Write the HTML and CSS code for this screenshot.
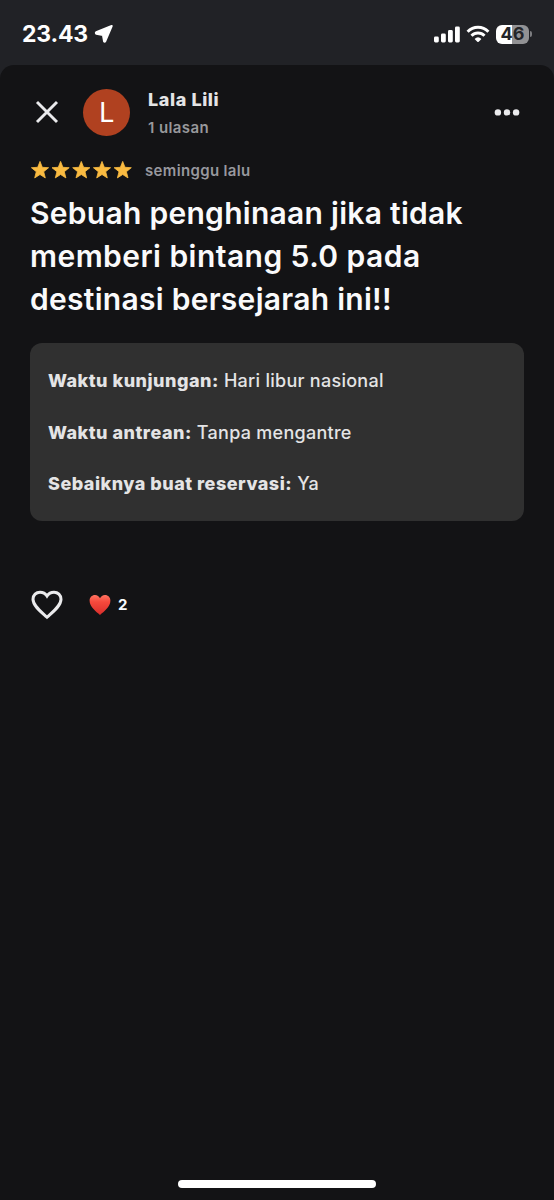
FILE: index.html
```
<!DOCTYPE html>
<html lang="id">
<head>
<meta charset="utf-8">
<title>Ulasan</title>
<link rel="stylesheet" href="styles.css">
</head>
<body>
<div class="screen">
  <div class="status">
    <span class="time">23.43</span>
    <svg class="location" width="20" height="20" viewBox="0 0 20 20"><path d="M17.700 2 2.200 8.300Q1.400 9 2.300 9.800L8.900 10.900 10 17.200Q10.600 18.300 11.300 17.200Z" fill="#fff" stroke="#fff" stroke-width="2" stroke-linejoin="round"/></svg>
    <div class="indicators">
      <svg width="26" height="17" viewBox="0 0 26 17" fill="#fff"><rect y="10.5" width="4.8" height="6" rx="1.4"/><rect x="7" y="7.5" width="4.8" height="9" rx="1.4"/><rect x="14" y="4" width="4.8" height="12.5" rx="1.4"/><rect x="21" y="0.5" width="4.8" height="16" rx="1.4"/></svg>
      <svg class="wifi" width="24" height="18" viewBox="0 0 24 18"><g fill="none" stroke="#fff" stroke-width="3"><path d="M1.6 6.7C7.4.9 16.6.9 22.4 6.7"/><path d="M5.5 10.8C9.1 7.2 14.900 7.200 18.500 10.800"/></g><path d="M8.600 13.900Q12 10.800 15.400 13.900L12.700 16.700Q12 17.300 11.300 16.700Z" fill="#fff"/></svg>
      <div class="battery">46</div>
      <span class="battery-tip"></span>
    </div>
  </div>
  <main class="sheet">
    <header class="header">
      <svg class="close" width="34" height="34" viewBox="0 0 34 34"><path d="M7 7 27 27M27 7 7 27" stroke="#eaeaec" stroke-width="2.900"/></svg>
      <div class="avatar">L</div>
      <div class="author">
        <div class="name">Lala Lili</div>
        <div class="count">1 ulasan</div>
      </div>
      <svg class="more" width="26" height="8" viewBox="0 0 26 8" fill="#eaeaec"><circle cx="3.900" cy="4.400" r="3.200"/><circle cx="13" cy="4.400" r="3.200"/><circle cx="22.100" cy="4.400" r="3.200"/></svg>
    </header>
    <div class="rating">
      <svg width="104" height="20" viewBox="0 0 104 20" fill="#fabb41"><defs><path id="star" d="M10 1.400 12.300 7.300 18.600 7.700 13.700 11.700 15.300 17.900 10 14.500 4.700 17.900 6.300 11.700 1.400 7.700 7.700 7.300Z" stroke="#fabb41" stroke-width=".8" stroke-linejoin="round"/></defs><use href="#star"/><use href="#star" x="20.600"/><use href="#star" x="41.300"/><use href="#star" x="62"/><use href="#star" x="82.700"/></svg>
      <span class="ago">seminggu lalu</span>
    </div>
    <h1 class="title">Sebuah penghinaan jika tidak<br><span class="wide">memberi bintang 5.0 pada</span><br>destinasi bersejarah ini!!</h1>
    <section class="details">
      <p><b>Waktu kunjungan:</b> Hari libur nasional</p>
      <p><b>Waktu antrean:</b> Tanpa mengantre</p>
      <p><b>Sebaiknya buat reservasi:</b> Ya</p>
    </section>
    <div class="reactions">
      <svg width="34" height="30" viewBox="0 0 34 30"><path d="M17 27.200C11.500 22.200 3 16 3 9.300C3 5 6.200 2.200 10 2.200C13 2.200 15.500 3.700 17 6C18.500 3.700 21 2.200 24 2.200C27.800 2.200 31 5 31 9.300C31 16 22.500 22.200 17 27.200Z" fill="none" stroke="#eaeaec" stroke-width="3"/></svg>
      <svg class="love" width="22" height="22" viewBox="0 0 22 22"><defs><linearGradient id="red" x2="0" y2="1"><stop stop-color="#ff7462"/><stop offset=".35" stop-color="#f6493c"/><stop offset="1" stop-color="#d92e2b"/></linearGradient></defs><path d="M11 21C7 17.500.6 13 .6 6.800C.6 3.200 3 1 6 1C8.400 1 10 2.300 11 4.300C12 2.300 13.600 1 16 1C19 1 21.400 3.200 21.400 6.800C21.400 13 15 17.500 11 21Z" fill="url(#red)"/></svg>
      <span class="likes">2</span>
    </div>
    <div class="home"></div>
  </main>
</div>
</body>
</html>
```
FILE: styles.css
```
* { box-sizing: border-box; }
body { margin: 0; background: #212226; font-family: Inter, "Liberation Sans", sans-serif; color: #e4e4e5; }
svg { display: block; flex: none; }
.screen { width: 554px; height: 1200px; display: flex; flex-direction: column; }
.status { height: 65px; padding: 3px 22px 0; display: flex; align-items: center; color: #fff; }
.time { font-size: 23px; font-weight: 700; letter-spacing: -0.2px; }
.location { margin-left: 6px; }
.indicators { margin-left: auto; display: flex; align-items: center; }
.wifi { margin-left: 6px; }
.battery { width: 33px; height: 19px; margin-left: 6px; border-radius: 6px; background: linear-gradient(90deg, #fff 47%, #929294 47%); color: #242529; font-size: 18px; font-weight: 700; line-height: 18px; text-align: center; }
.battery-tip { width: 2px; height: 6px; margin-left: 1px; border-radius: 0 3px 3px 0; background: #7c7d80; }
.sheet { flex: 1; background: #131315; border-radius: 14px 14px 0 0; padding: 22px 30px 0; display: flex; flex-direction: column; }
.header { height: 50px; display: flex; align-items: center; }
.avatar { width: 47px; height: 47px; margin-left: 19px; border-radius: 50%; background: #b04120; color: #fff; font: 27px/49px Roboto, sans-serif; text-align: center; }
.author { margin-left: 18px; padding-top: 4px; }
.name { font-size: 18px; line-height: 24px; font-weight: 800; letter-spacing: 0.6px; }
.count { margin-top: 4px; font-size: 15px; line-height: 24px; font-weight: 600; color: #98989b; letter-spacing: 0.4px; }
.more { margin-left: auto; margin-right: 4px; }
.rating { height: 24px; margin-top: 21px; display: flex; align-items: center; }
.ago { margin-left: 11px; font-size: 15px; font-weight: 600; color: #98989e; letter-spacing: 0.35px; }
.title { margin: 10px 0 0; font: 600 30px/43px Inter, sans-serif; color: #fafafb; white-space: nowrap; letter-spacing: 0.28px; }
.title .wide { letter-spacing: 0.45px; }
.details { height: 178px; margin-top: 22px; padding: 12px 18px; border-radius: 12px; background: #303030; display: flex; flex-direction: column; }
.details p { margin: 0; font-size: 18px; line-height: 51.700px; font-weight: 500; white-space: nowrap; letter-spacing: 0.27px; }
.details b { font-weight: 800; letter-spacing: 0.5px; }
.reactions { height: 34px; margin-top: 67px; display: flex; align-items: center; }
.love { margin-left: 25px; }
.likes { margin-left: 7px; font: 700 15px/20px Inter, sans-serif; color: #fafafb; }
.home { width: 198px; height: 8px; margin: auto auto 12px; border-radius: 4px; background: #fff; }
```
